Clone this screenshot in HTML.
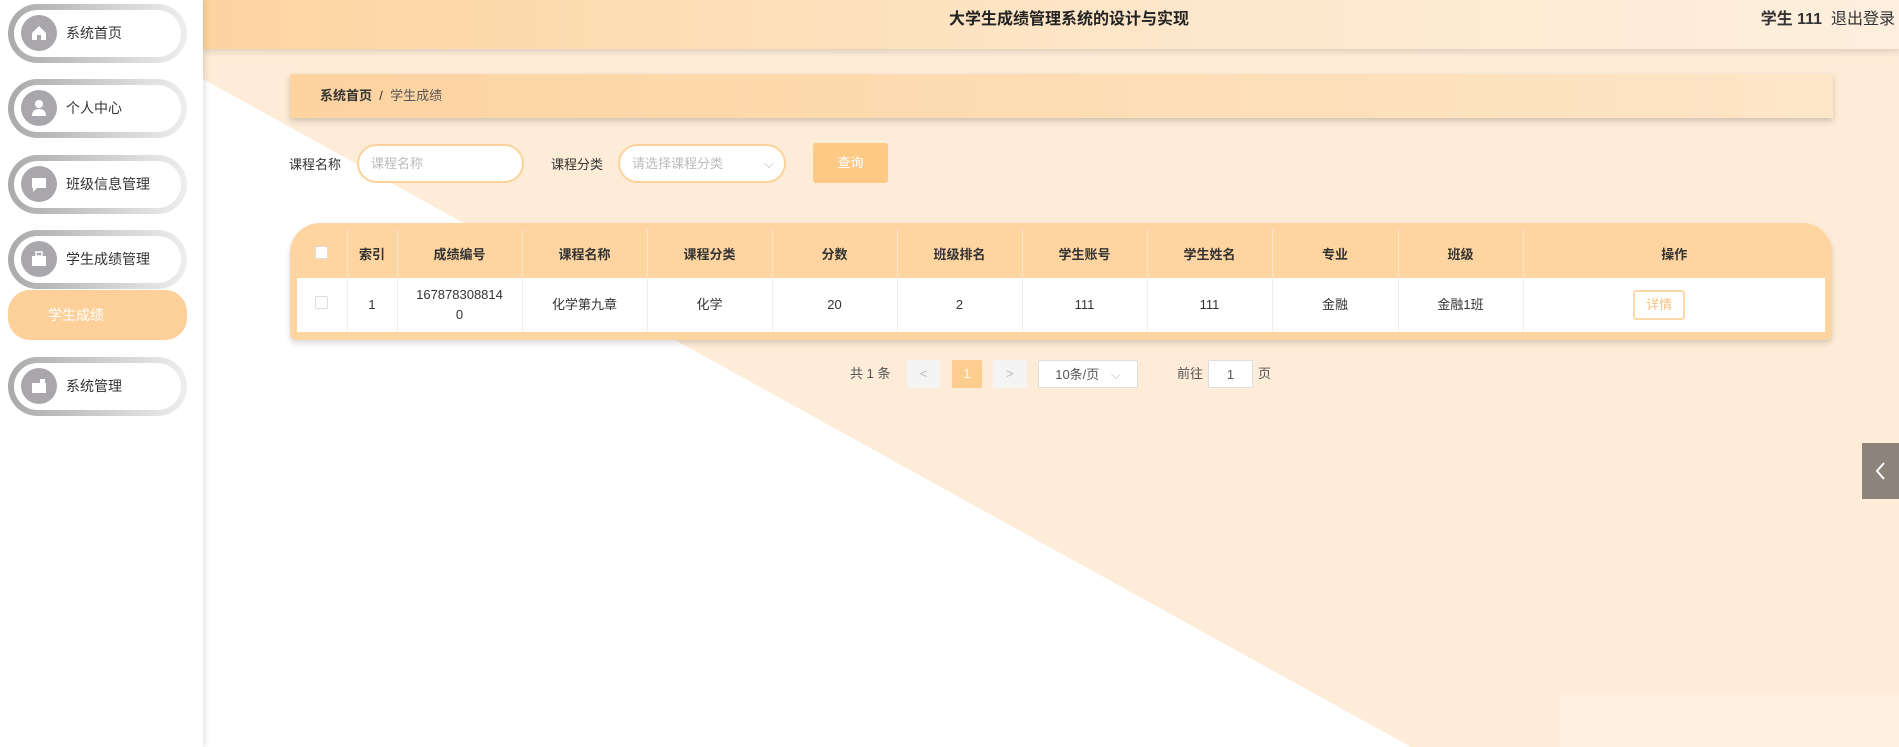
<!DOCTYPE html>
<html><head><meta charset="utf-8"><style>
*{box-sizing:border-box;margin:0;padding:0}
body{width:1899px;height:747px;overflow:hidden;position:relative;font-family:"Liberation Sans","Noto Sans CJK SC",sans-serif;background:#fff;color:#333}
.bg{position:absolute;left:0;top:0;width:1899px;height:747px}
.side{position:absolute;left:0;top:0;width:203px;height:747px;background:#fff;box-shadow:2px 0 6px rgba(0,0,0,.12);z-index:3}
.item{position:absolute;left:8px;width:179px;height:59px;border-radius:30px;background:linear-gradient(90deg,#aaa,#eee);padding:6px}
.item .in{width:100%;height:100%;border-radius:24px;background:#fff;position:relative}
.item .ic{position:absolute;left:7px;top:5px;width:36px;height:36px;border-radius:50%;background:#a9a7ab}
.item .t{position:absolute;left:52px;top:0;line-height:47px;font-size:14px;color:#333}
.sub{position:absolute;left:8px;top:290px;width:179px;height:50px;border-radius:22px;background:#fdd09a;color:#fff;font-size:14px;line-height:50px;padding-left:40px}
.hdr{position:absolute;left:203px;top:0;width:1696px;height:49px;background:linear-gradient(90deg,#fdd4a0,#fde8cc 60%,#fdefde);box-shadow:0 3px 6px rgba(0,0,0,.12);z-index:2}
.title{position:absolute;left:18px;width:100%;top:0;line-height:40px;text-align:center;font-size:16px;font-weight:bold;color:#222}
.user{position:absolute;right:4px;top:0;line-height:40px;font-size:16px;color:#333}
.bc{position:absolute;left:290px;top:74px;width:1543px;height:44px;background:linear-gradient(90deg,#fdd3a0,#fde6c7);box-shadow:0 3px 6px rgba(0,0,0,.18);font-size:13px;line-height:44px;padding-left:30px}
.lbl{position:absolute;font-size:13px;top:154px;color:#333}
.inp{position:absolute;top:144px;height:39px;border:2px solid #fdd29a;border-radius:20px;background:#fff;font-size:13px;color:#bbb;line-height:35px;padding-left:12px}
.btn{position:absolute;left:813px;top:143px;width:75px;height:40px;background:#fdc985;color:#fff;font-size:13px;line-height:40px;text-align:center;border-radius:3px}
.tbl{position:absolute;left:290px;top:223px;width:1542px;height:117px;background:#fed5a0;border-radius:30px 30px 6px 6px;box-shadow:0 3px 6px rgba(0,0,0,.15)}
table{border-collapse:collapse;position:absolute;left:7px;top:6px;width:1528px;font-size:13px;table-layout:fixed}
th{height:49px;font-weight:bold;color:#333;border-left:1px solid #f6e4cc}
td{height:54px;background:#fff;text-align:center;border-left:1px solid #f1ede8;color:#333;line-height:20px}
th:first-child,td:first-child{border-left:none}
.cb{display:inline-block;width:13px;height:13px;border:1px solid #ddd;background:#fff;border-radius:2px}
.det{display:inline-block;width:52px;height:30px;border:2px solid #fdd9a9;color:#f5c27f;line-height:26px;border-radius:3px}
.pg{position:absolute;top:361px;font-size:13px;color:#555;line-height:26px}
.pb{position:absolute;top:360px;height:28px;background:#f4f4f5;color:#bbb;text-align:center;line-height:28px;font-size:13px;border-radius:2px}
.tab{position:absolute;left:1862px;top:443px;width:37px;height:56px;background:#8c837b}
</style></head><body>
<svg class="bg" viewBox="0 0 1899 747"><rect width="1899" height="747" fill="#fff"/><polygon points="203,49 1899,49 1899,747 1411,747 203,79" fill="#fdecd7"/><polygon points="1560,695 1899,695 1899,747 1560,747" fill="#fef1e2"/></svg>
<div class="side">
 <div class="item" style="top:4px"><div class="in"><div class="ic"><svg width="36" height="36"><path d="M11 18 L18 11 L25 18 V25 H20 V20 H16 V25 H11Z" fill="#fff"/></svg></div><div class="t">系统首页</div></div></div>
 <div class="item" style="top:79px"><div class="in"><div class="ic"><svg width="36" height="36"><circle cx="18" cy="14" r="4" fill="#fff"/><path d="M11 26 Q11 19 18 19 Q25 19 25 26Z" fill="#fff"/></svg></div><div class="t">个人中心</div></div></div>
 <div class="item" style="top:155px"><div class="in"><div class="ic"><svg width="36" height="36"><path d="M11 12 H25 V22 H16 L12 26 V22 H11Z" fill="#fff"/></svg></div><div class="t">班级信息管理</div></div></div>
 <div class="item" style="top:230px"><div class="in"><div class="ic"><svg width="36" height="36"><rect x="11" y="15" width="14" height="10" fill="#fff"/><rect x="15" y="11" width="6" height="4" fill="none" stroke="#fff" stroke-width="1.5"/></svg></div><div class="t">学生成绩管理</div></div></div>
 <div class="sub">学生成绩</div>
 <div class="item" style="top:357px"><div class="in"><div class="ic"><svg width="36" height="36"><rect x="11" y="15" width="14" height="10" fill="#fff"/><rect x="19" y="11" width="5" height="5" fill="#fff"/></svg></div><div class="t">系统管理</div></div></div>
</div>
<div class="hdr"><div class="title">大学生成绩管理系统的设计与实现</div><div class="user"><b>学生 111</b>&nbsp; 退出登录</div></div>
<div class="bc"><b>系统首页</b>&nbsp;&nbsp;/&nbsp;&nbsp;<span style="color:#555">学生成绩</span></div>
<div class="lbl" style="left:289px">课程名称</div>
<div class="inp" style="left:357px;width:167px">课程名称</div>
<div class="lbl" style="left:551px">课程分类</div>
<div class="inp" style="left:618px;width:168px">请选择课程分类<span style="position:absolute;right:10px;color:#bbb">⌵</span></div>
<div class="btn">查询</div>
<div class="tbl"><table>
<colgroup><col style="width:50px"><col style="width:50px"><col style="width:125px"><col style="width:125px"><col style="width:125px"><col style="width:125px"><col style="width:125px"><col style="width:125px"><col style="width:125px"><col style="width:126px"><col style="width:125px"><col></colgroup>
<tr><th><span class="cb"></span></th><th>索引</th><th>成绩编号</th><th>课程名称</th><th>课程分类</th><th>分数</th><th>班级排名</th><th>学生账号</th><th>学生姓名</th><th>专业</th><th>班级</th><th>操作</th></tr>
<tr><td><span class="cb"></span></td><td>1</td><td>167878308814<br>0</td><td>化学第九章</td><td>化学</td><td>20</td><td>2</td><td>111</td><td>111</td><td>金融</td><td>金融1班</td><td><span class="det" style="margin-right:30px">详情</span></td></tr>
</table></div>
<div class="pg" style="left:850px">共 1 条</div>
<div class="pb" style="left:907px;width:33px">&lt;</div>
<div class="pb" style="left:952px;width:30px;background:#fdcd8f;color:#fff">1</div>
<div class="pb" style="left:993px;width:34px">&gt;</div>
<div class="pb" style="left:1038px;width:100px;background:#fff;border:1px solid #ddd;color:#555">10条/页 <span style="color:#bbb;margin-left:8px">⌵</span></div>
<div class="pg" style="left:1177px">前往</div>
<div class="pb" style="left:1208px;width:45px;background:#fff;border:1px solid #ddd;color:#555">1</div>
<div class="pg" style="left:1258px">页</div>
<div class="tab"><svg width="37" height="56"><path d="M22 20 L15 28 L22 36" stroke="#fff" stroke-width="2" fill="none"/></svg></div>
</body></html>
